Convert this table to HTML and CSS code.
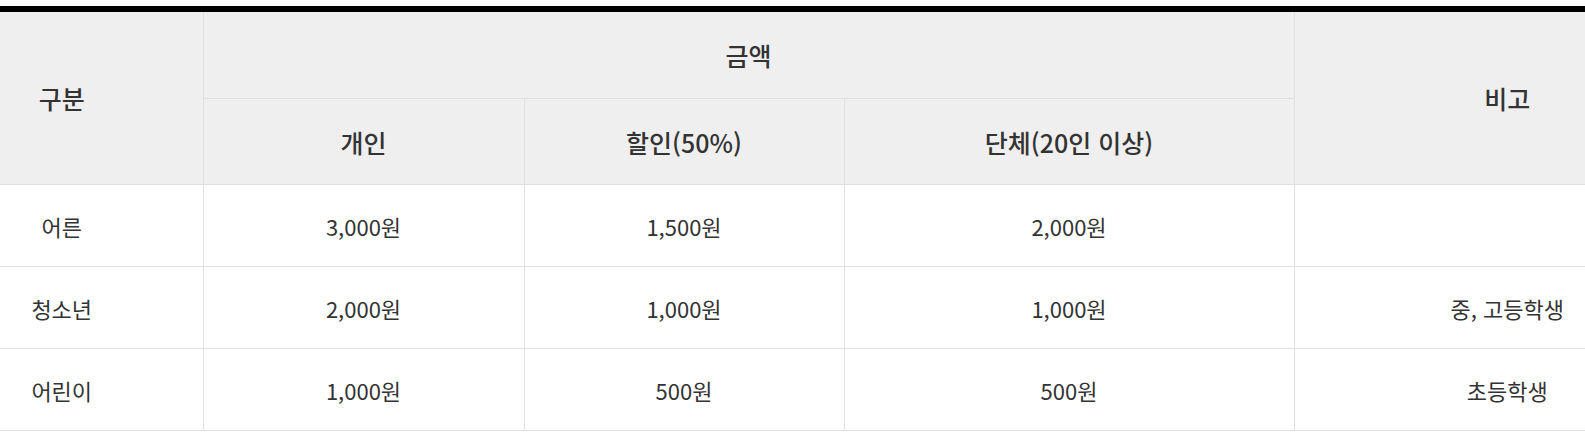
FILE: index.html
```html
<!DOCTYPE html>
<html lang="ko">
<head>
<meta charset="utf-8">
<title>요금 안내</title>
<link rel="stylesheet" href="styles.css">
</head>
<body>
<table class="fee-table">
  <colgroup>
    <col class="c-kind">
    <col class="c-person">
    <col class="c-discount">
    <col class="c-group">
    <col class="c-note">
  </colgroup>
  <thead>
    <tr class="head-top">
      <th rowspan="2" class="kind">구분</th>
      <th colspan="3">금액</th>
      <th rowspan="2" class="note">비고</th>
    </tr>
    <tr class="head-sub">
      <th>개인</th>
      <th>할인(50%)</th>
      <th>단체(20인 이상)</th>
    </tr>
  </thead>
  <tbody>
    <tr>
      <td class="kind">어른</td>
      <td>3,000원</td>
      <td>1,500원</td>
      <td>2,000원</td>
      <td class="note"></td>
    </tr>
    <tr>
      <td class="kind">청소년</td>
      <td>2,000원</td>
      <td>1,000원</td>
      <td>1,000원</td>
      <td class="note">중, 고등학생</td>
    </tr>
    <tr>
      <td class="kind">어린이</td>
      <td>1,000원</td>
      <td>500원</td>
      <td>500원</td>
      <td class="note">초등학생</td>
    </tr>
  </tbody>
</table>
</body>
</html>
```
FILE: styles.css
```css
html, body {
  margin: 0;
  padding: 0;
  background: #ffffff;
}
body {
  padding-top: 6px;
  font-family: "Noto Sans CJK KR", "Noto Sans", sans-serif;
  color: #333333;
}
.fee-table {
  width: 1585px;
  border-collapse: collapse;
  table-layout: fixed;
  border-top: 6px solid #000000;
}
.c-kind { width: 203px; }
.c-person { width: 321px; }
.c-discount { width: 320px; }
.c-group { width: 450px; }
.c-note { width: 291px; }

.fee-table th,
.fee-table td {
  padding: 0;
  text-align: center;
  vertical-align: middle;
  border: 1px solid #e0e0e0;
}
.fee-table th {
  background: #efefef;
  font-size: 25px;
  font-weight: 500;
  color: #333333;
}
.fee-table td {
  font-size: 22px;
  font-weight: 400;
  height: 81px;
}
.head-top th { height: 86px; border-top: none; }
.head-sub th { height: 85px; }

.fee-table .kind {
  border-left: none;
  padding-right: 79px;
}
.fee-table .note {
  border-right: none;
  padding-left: 135px;
}
```
